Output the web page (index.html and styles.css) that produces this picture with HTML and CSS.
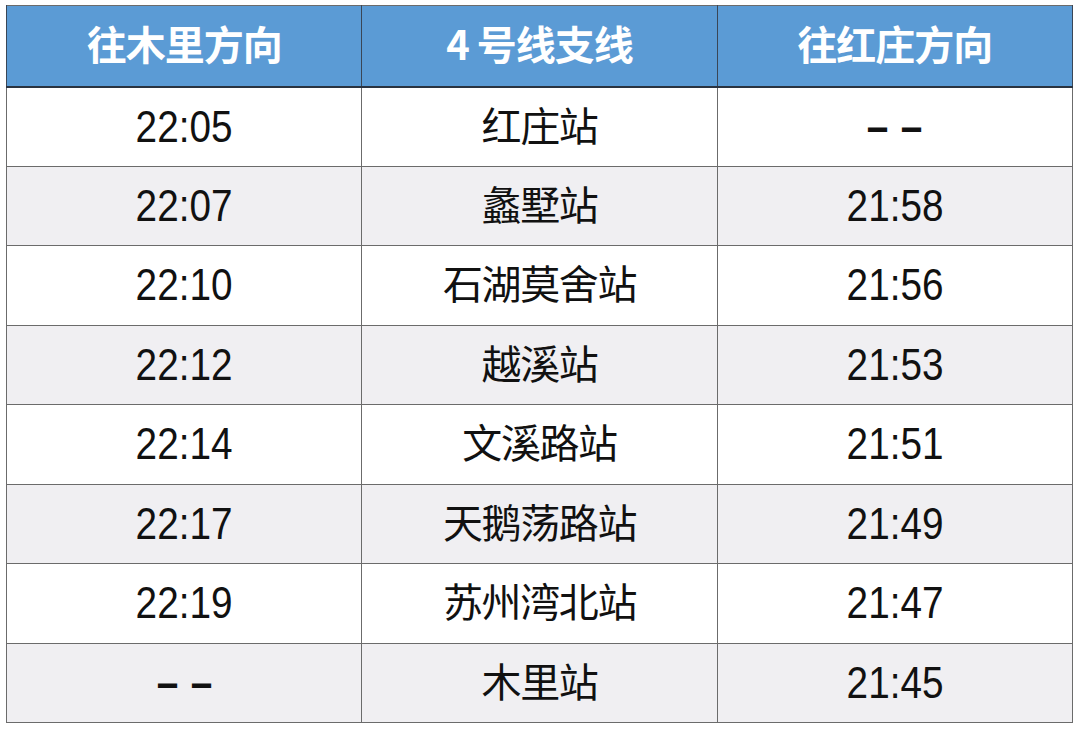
FILE: index.html
```html
<!DOCTYPE html>
<html lang="zh">
<head>
<meta charset="utf-8">
<title>4号线支线 末班车时刻</title>
<link rel="stylesheet" href="styles.css">
</head>
<body>
<table class="timetable">
  <thead>
    <tr>
      <th>往木里方向</th>
      <th>4 号线支线</th>
      <th>往红庄方向</th>
    </tr>
  </thead>
  <tbody>
    <tr><td><span class="num">22:05</span></td><td class="st">红庄站</td><td><span class="num dash">– –</span></td></tr>
    <tr><td><span class="num">22:07</span></td><td class="st">蠡墅站</td><td><span class="num">21:58</span></td></tr>
    <tr><td><span class="num">22:10</span></td><td class="st">石湖莫舍站</td><td><span class="num">21:56</span></td></tr>
    <tr><td><span class="num">22:12</span></td><td class="st">越溪站</td><td><span class="num">21:53</span></td></tr>
    <tr><td><span class="num">22:14</span></td><td class="st">文溪路站</td><td><span class="num">21:51</span></td></tr>
    <tr><td><span class="num">22:17</span></td><td class="st">天鹅荡路站</td><td><span class="num">21:49</span></td></tr>
    <tr><td><span class="num">22:19</span></td><td class="st">苏州湾北站</td><td><span class="num">21:47</span></td></tr>
    <tr><td><span class="num dash">– –</span></td><td class="st">木里站</td><td><span class="num">21:45</span></td></tr>
  </tbody>
</table>
</body>
</html>
```

FILE: styles.css
```css
html, body {
  margin: 0;
  padding: 0;
  background: #ffffff;
}

body {
  padding: 5px 0 0 6px;
  font-family: "Noto Sans CJK SC", "Liberation Sans", sans-serif;
}

.timetable {
  border-collapse: collapse;
  table-layout: fixed;
  width: 1067px;
  border: 1.5px solid #6b6b6b;
}

.timetable th,
.timetable td {
  border-left: 1.5px solid #6b6b6b;
  border-right: 1.5px solid #6b6b6b;
  text-align: center;
  vertical-align: middle;
  padding: 0;
  overflow: hidden;
}

.timetable thead tr {
  height: 81px;
}

.timetable th {
  background: #5b9bd5;
  color: #ffffff;
  font-size: 40px;
  font-weight: 700;
  letter-spacing: -1px;
  border-bottom: 2px solid #2a3340;
  border-left-color: #3a4656;
  border-right-color: #3a4656;
  line-height: 1;
  padding-bottom: 6px;
}

.timetable tbody tr {
  height: 79.5px;
}

.timetable tbody td {
  border-bottom: 1.5px solid #6b6b6b;
  color: #111111;
}

.timetable tbody tr:nth-child(even) td {
  background: #f0eff2;
}

.timetable td.st {
  font-size: 40px;
  letter-spacing: -1.4px;
  line-height: 1;
  padding-bottom: 6px;
}

.num {
  display: inline-block;
  font-family: "Liberation Sans", Arial, sans-serif;
  font-size: 44px;
  line-height: 1;
  transform: scaleX(0.88);
}

.num.dash {
  font-weight: 700;
  word-spacing: 2px;
}
```
